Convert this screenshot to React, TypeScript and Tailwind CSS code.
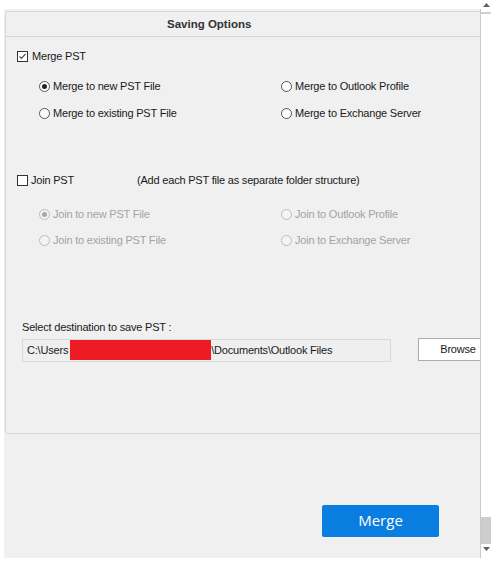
import React from "react";

const font = { fontFamily: '"Liberation Sans", Arial, sans-serif' };

function Radio({ checked, disabled }: { checked?: boolean; disabled?: boolean }) {
  return (
    <span
      className={[
        "flex h-[11px] w-[11px] shrink-0 items-center justify-center rounded-full border",
        disabled ? "border-[#bcbcbc] bg-[#f4f4f4]" : "border-[#555] bg-white",
      ].join(" ")}
    >
      {checked && (
        <span
          className={[
            "h-[5px] w-[5px] rounded-full",
            disabled ? "bg-[#a8a8a8]" : "bg-[#222]",
          ].join(" ")}
        />
      )}
    </span>
  );
}

function Check({ checked }: { checked?: boolean }) {
  return (
    <span className="flex h-[11px] w-[11px] shrink-0 items-center justify-center border border-[#333] bg-white">
      {checked && (
        <svg width="9" height="9" viewBox="0 0 9 9">
          <path d="M1.5 4.5 L3.5 6.5 L7.5 2" fill="none" stroke="#555" strokeWidth="1.2" />
        </svg>
      )}
    </span>
  );
}

function Option({
  label,
  checked,
  disabled,
}: {
  label: string;
  checked?: boolean;
  disabled?: boolean;
}) {
  return (
    <div className="flex h-[16px] items-center gap-[3px]">
      <Radio checked={checked} disabled={disabled} />
      <span className={disabled ? "text-[#a3a3a3]" : "text-[#1a1a1a]"}>{label}</span>
    </div>
  );
}

export default function App() {
  return (
    <div
      className="flex h-[567px] w-[501px] bg-white text-[11px] tracking-[-0.2px] leading-none"
      style={font}
    >
      <div className="ml-[4px] mt-[9px] h-[549px] w-[477px] overflow-hidden border-r border-[#c9c9c9] bg-[#f0f0f0]">
        <div className="ml-[1px] mt-[2px] h-[423px] w-[490px] rounded-[3px] border border-[#d6d6d6]">
          <div className="flex h-[25px] items-center border-b border-[#d6d6d6] pl-[161px] pt-[2px] text-[11.5px] font-bold tracking-normal text-[#333]">
            Saving Options
          </div>

          <div className="mt-[11px] ml-[11px] flex h-[16px] items-center gap-[4px]">
            <Check checked />
            <span className="text-[#1a1a1a]">Merge PST</span>
          </div>

          <div className="ml-[33px] mt-[14px] flex flex-col gap-[11px]">
            <div className="flex">
              <div className="w-[242px]">
                <Option label="Merge to new PST File" checked />
              </div>
              <Option label="Merge to Outlook Profile" />
            </div>
            <div className="flex">
              <div className="w-[242px]">
                <Option label="Merge to existing PST File" />
              </div>
              <Option label="Merge to Exchange Server" />
            </div>
          </div>

          <div className="mt-[51px] ml-[11px] flex h-[16px] items-center">
            <Check />
            <span className="ml-[3px] w-[106px] text-[#1a1a1a]">Join PST</span>
            <span className="text-[#1a1a1a]">
              (Add each PST file as separate folder structure)
            </span>
          </div>

          <div className="ml-[33px] mt-[18px] flex flex-col gap-[10px]">
            <div className="flex">
              <div className="w-[242px]">
                <Option label="Join to new PST File" checked disabled />
              </div>
              <Option label="Join to Outlook Profile" disabled />
            </div>
            <div className="flex">
              <div className="w-[242px]">
                <Option label="Join to existing PST File" disabled />
              </div>
              <Option label="Join to Exchange Server" disabled />
            </div>
          </div>

          <div className="ml-[16px] mt-[71px] flex h-[16px] items-center text-[#1a1a1a]">
            Select destination to save PST :
          </div>

          <div className="ml-[16px] mt-[3px] flex items-start">
            <div className="mt-[1px] flex h-[23px] w-[369px] shrink-0 items-center border border-[#d9d9d9] bg-[#efefef] pl-[4px] text-[#1a1a1a]">
              <span>C:\Users</span>
              <span className="ml-[2px] h-[20px] w-[141px] self-start bg-[#ed1c24]" />
              <span>\Documents\Outlook Files</span>
            </div>
            <button className="ml-[27px] flex h-[23px] w-[80px] shrink-0 items-center justify-center border border-[#adadad] bg-white text-[#1a1a1a]">
              Browse
            </button>
          </div>
        </div>

        <button
          className="ml-[318px] mt-[71px] flex h-[32px] w-[117px] items-center justify-center rounded-[2px] bg-[#0a7ee0] pb-[1px] text-[15px] tracking-normal text-white"
          style={{ fontFamily: '"Open Sans", "Noto Sans", sans-serif' }}
        >
          Merge
        </button>
      </div>

      <div className="flex h-[558px] w-[10px] flex-col bg-white">
        <div className="flex h-[14px] justify-center border-b-2 border-[#cfcfcf] pt-[3px]">
          <svg width="7" height="5" viewBox="0 0 7 5">
            <path d="M3.5 0 L7 4 L0 4 Z" fill="#606060" />
          </svg>
        </div>
        <div className="flex-1" />
        <div className="h-[27px] bg-[#cdcdcd]" />
        <div className="flex h-[14px] justify-center pt-[3px]">
          <svg width="7" height="5" viewBox="0 0 7 5">
            <path d="M0 0 L7 0 L3.5 4 Z" fill="#606060" />
          </svg>
        </div>
      </div>
    </div>
  );
}
